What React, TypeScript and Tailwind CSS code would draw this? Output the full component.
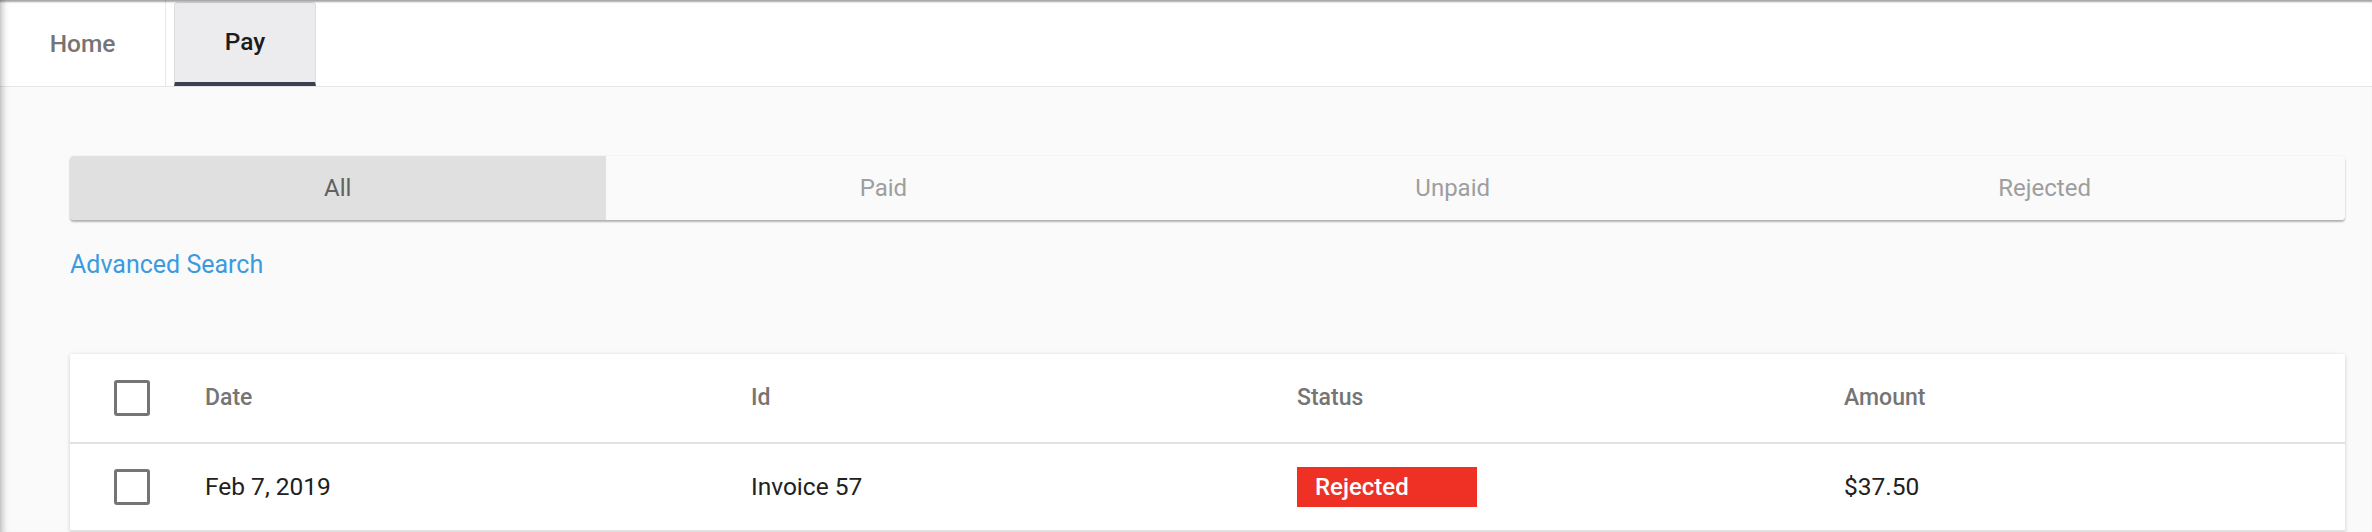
import React from 'react';

const segments = [
  { label: 'All', active: true },
  { label: 'Paid', active: false },
  { label: 'Unpaid', active: false },
  { label: 'Rejected', active: false },
];

// Outlined checkbox, material style
const Checkbox = () => (
  <div className="w-[36px] h-[36px] rounded-[3px] border-[3px] border-[#757575] bg-white" />
);

export default function App() {
  return (
    <div className="relative min-h-[532px] bg-[#fafafa] font-['Roboto',sans-serif] overflow-hidden">
      {/* Top tabs */}
      <div className="flex items-end h-[87px] bg-white border-b border-[#e6e6e6]">
        <div className="w-[166px] h-full flex items-center justify-center pt-[3px] border-r border-[#e8e8e8] text-[24.5px] font-medium text-[#757575]">
          Home
        </div>
        <div className="ml-[8px] w-[142px] h-[84px] flex items-center justify-center rounded-t-[4px] border border-b-4 border-[#dcdce1] border-b-[#3d4051] bg-[#ececef] text-[24.5px] font-medium text-[#1c1c1c]">
          Pay
        </div>
      </div>

      <div className="pl-[70px] pr-[27px]">
        {/* Status filter */}
        <div className="mt-[69px] flex h-[64px] rounded-[4px] overflow-hidden bg-[#fafafa] shadow-[0_2px_2px_rgba(0,0,0,0.28),0_0_2px_rgba(0,0,0,0.08)]">
          {segments.map((s) => (
            <div
              key={s.label}
              className={`flex-auto flex items-center justify-center text-[24px] ${
                s.active ? 'bg-[#e0e0e0] text-[#616161]' : 'bg-[#fafafa] text-[#9e9e9e]'
              }`}
            >
              {s.label}
            </div>
          ))}
        </div>

        <div className="mt-[27px] text-[25px] leading-[36px] text-[#3c9ade]">Advanced Search</div>

        {/* Table */}
        <div className="mt-[71px] bg-white rounded-t-[2px] shadow-[0_1px_4px_rgba(0,0,0,0.18)]">
          <div className="grid grid-cols-[135px_546px_546px_547px_1fr] items-center h-[90px] border-b-2 border-[#e2e2e2] text-[23px] font-medium text-[#757575]">
            <div className="pl-[44px]">
              <Checkbox />
            </div>
            <div>Date</div>
            <div>Id</div>
            <div>Status</div>
            <div>Amount</div>
          </div>
          <div className="grid grid-cols-[135px_546px_546px_547px_1fr] items-center h-[88px] border-b-2 border-[#e2e2e2] text-[24.5px] text-[#212121]">
            <div className="pl-[44px]">
              <Checkbox />
            </div>
            <div>Feb 7, 2019</div>
            <div>Invoice 57</div>
            <div>
              <div className="w-[180px] h-[40px] flex items-center pl-[18px] bg-[#ee3124] text-white text-[24px] font-medium">
                Rejected
              </div>
            </div>
            <div>$37.50</div>
          </div>
        </div>
      </div>

      {/* window edge shading */}
      <div className="pointer-events-none absolute inset-0 shadow-[inset_0_3px_2px_-1px_rgba(0,0,0,0.35),inset_8px_0_7px_-6px_rgba(0,0,0,0.28)]" />
    </div>
  );
}
